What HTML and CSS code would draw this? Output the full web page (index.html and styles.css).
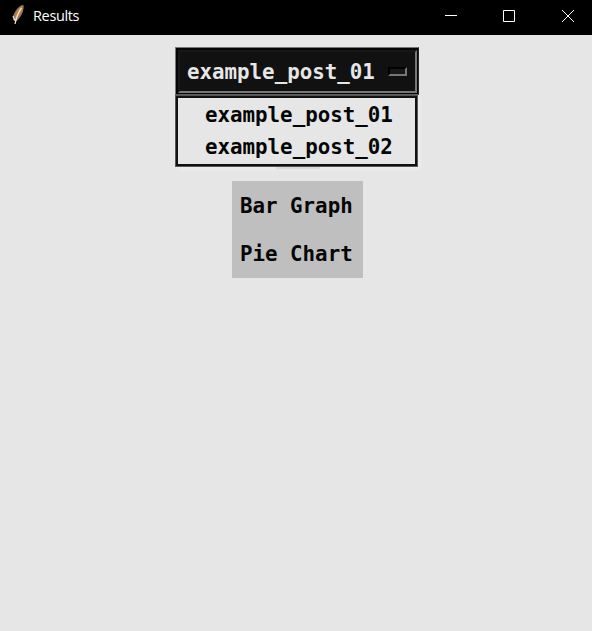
FILE: index.html
```html
<!DOCTYPE html>
<html lang="en">
<head>
<meta charset="utf-8">
<title>Results</title>
<link rel="stylesheet" href="styles.css">
</head>
<body>
<header class="titlebar">
  <svg class="feather" width="14" height="22" viewBox="0 0 14 22">
    <path d="M12.500 1C8 1.500 4 6 2 12.500L2.500 16L5 17.500C9.500 14 13.500 7 12.500 1Z" fill="#8c7868"/>
    <path d="M11.500 2C7 4 4.500 9 3.500 14L6 14C9.500 10 12 6 11.500 2Z" fill="#c58445"/>
    <path d="M10.500 4Q6 10 4 20" fill="none" stroke="#fff1df" stroke-width="1.200"/>
    <path d="M2 12L3.500 16L6 14.500" fill="none" stroke="#dedede" stroke-width="1.200"/>
  </svg>
  <span class="title">Results</span>
  <div class="controls">
    <svg width="12" height="12" viewBox="0 0 12 12"><path d="M0 5.500H12"/></svg>
    <svg width="12" height="12" viewBox="0 0 12 12"><path d="M.5.5H11.500V11.500H.5Z"/></svg>
    <svg width="12" height="12" viewBox="0 0 12 12"><path d="M0 0L12 12M12 0L0 12"/></svg>
  </div>
</header>
<main>
  <div class="select"><div class="select-face"><span>example_post_01</span><i class="indicator"></i></div></div>
  <div class="menu"><div class="menu-inner"><div>example_post_01</div><div>example_post_02</div></div></div>
  <div class="strip"></div>
  <div class="buttons"><div>Bar Graph</div><div>Pie Chart</div></div>
</main>
</body>
</html>
```
FILE: styles.css
```css
* { box-sizing: border-box; }
body { margin: 0; height: 631px; background: #e6e6e6; overflow: hidden; }
.titlebar { height: 35px; background: #000; display: flex; align-items: flex-start; color: #fff; }
.feather { margin: 4px 0 0 11px; }
.title { margin-left: 8px; font: 400 14.5px/20px "Open Sans", sans-serif; padding-top: 6px; letter-spacing: -0.35px; }
.controls { margin: 10px 18px 0 auto; display: flex; gap: 46px; }
.controls svg { display: block; fill: none; stroke: #fff; stroke-width: 1; }
.controls svg:last-child { margin-left: 1px; }
main { padding: 12px 0 0 175px; font: bold 20.8px/32.5px "DejaVu Sans Mono", monospace; color: #050505; }
.select { width: 244px; height: 48px; background: #050505; border: 1px solid #777; border-right-color: #222; border-bottom-color: #555; padding: 2px 1px 1px 2px; }
.select-face { height: 43px; background: #111; border: 2px solid; border-color: #181818 #777 #777 #181818; display: flex; align-items: center; color: #e6e6e6; padding-left: 7px; }
.select-face span { padding-top: 2px; }
.indicator { width: 19px; height: 9px; margin-left: 13px; border: 2px solid; border-color: #030303 #777 #777 #030303; background: #181818; }
.menu { width: 243px; height: 72px; border: 1px solid #555; background: #111; padding: 2px; box-shadow: 2px 2px 3px #efefef; }
.menu-inner { height: 66px; background: #e6e6e6; padding: 1px 0 0 27px; line-height: 32px; }
.strip { width: 44px; height: 2px; margin-left: 101px; background: #dadada; position: relative; }
.buttons { width: 131px; height: 97px; margin: 12px 0 0 57px; background: #bfbfbf; padding: 1px 0 0 8px; line-height: 48px; white-space: nowrap; }
```
